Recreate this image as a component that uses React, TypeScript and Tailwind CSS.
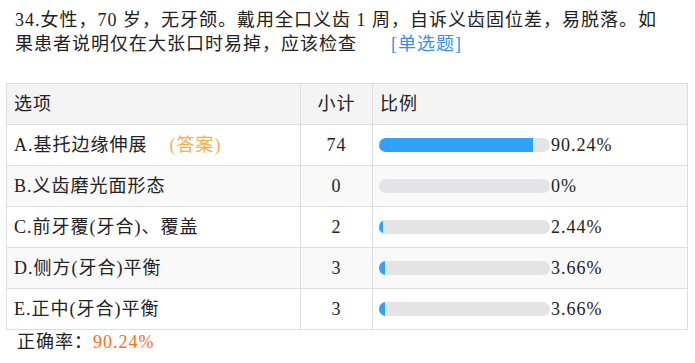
import React from "react";

const rows = [
  { label: "A.基托边缘伸展", answer: true, count: 74, pct: 90.24, text: "90.24%", shaded: false },
  { label: "B.义齿磨光面形态", answer: false, count: 0, pct: 0, text: "0%", shaded: true },
  { label: "C.前牙覆(牙合)、覆盖", answer: false, count: 2, pct: 2.44, text: "2.44%", shaded: false },
  { label: "D.侧方(牙合)平衡", answer: false, count: 3, pct: 3.66, text: "3.66%", shaded: true },
  { label: "E.正中(牙合)平衡", answer: false, count: 3, pct: 3.66, text: "3.66%", shaded: false },
];

export default function App() {
  return (
    <div
      className="w-[695px] h-[363px] bg-white text-[#222] text-[18px] tracking-[1px] overflow-hidden"
      style={{ fontFamily: '"Liberation Serif", "Noto Sans CJK SC", serif' }}
    >
      <div className="pt-[8px] pl-[15px] leading-[24px] whitespace-nowrap">
        <div>34.女性，70 岁，无牙颌。戴用全口义齿 1 周，自诉义齿固位差，易脱落。如</div>
        <div>
          果患者说明仅在大张口时易掉，应该检查
          <span className="ml-[34px] text-[#3b8ef0]">[单选题]</span>
        </div>
      </div>
      <table className="mt-[27px] ml-[6px] w-[681px] border-collapse table-fixed">
        <colgroup>
          <col className="w-[294px]" />
          <col className="w-[72px]" />
          <col className="w-[315px]" />
        </colgroup>
        <thead>
          <tr className="h-[41px] bg-[#f4f4f4]">
            <th className="border border-[#dddddd] text-left font-normal pl-[7px]">选项</th>
            <th className="border border-[#dddddd] text-center font-normal">小计</th>
            <th className="border border-[#dddddd] text-left font-normal pl-[7px]">比例</th>
          </tr>
        </thead>
        <tbody>
          {rows.map((r) => (
            <tr key={r.label} className={"h-[41px] " + (r.shaded ? "bg-[#f9f9f9]" : "bg-white")}>
              <td className="border border-[#dddddd] pl-[7px] whitespace-nowrap">
                {r.label}
                {r.answer && <span className="ml-[22px] text-[#f7ae4a]">(答案)</span>}
              </td>
              <td className="border border-[#dddddd] text-center">{r.count}</td>
              <td className="border border-[#dddddd] pl-[6px]">
                <div className="flex items-center">
                  <div className="w-[171px] h-[14px] rounded-full bg-[#e4e4e6] overflow-hidden">
                    <div className="h-full bg-[#2ea1f8]" style={{ width: `${r.pct}%` }} />
                  </div>
                  <span className="ml-[1px]">{r.text}</span>
                </div>
              </td>
            </tr>
          ))}
        </tbody>
      </table>
      <div className="pl-[17px] mt-[1px] leading-[22px]">
        正确率：<span className="text-[#ff6d1a]">90.24%</span>
      </div>
    </div>
  );
}
